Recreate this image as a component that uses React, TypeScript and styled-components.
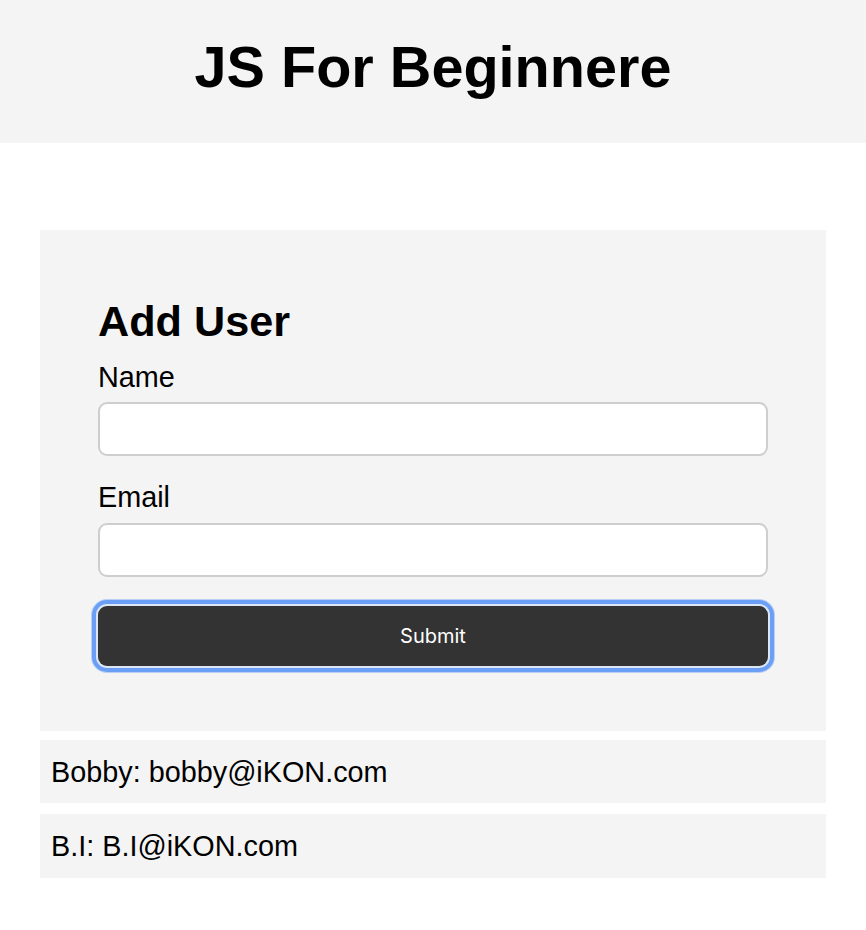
import styled, { createGlobalStyle } from "styled-components";

type User = {
  name: string;
  email: string;
};

const users: User[] = [
  { name: "Bobby", email: "bobby@iKON.com" },
  { name: "B.I", email: "B.I@iKON.com" },
];

const GlobalStyle = createGlobalStyle`
  body {
    margin: 0;
    background: #ffffff;
    color: #000000;
    font-family: "Liberation Sans", Arial, sans-serif;
  }
`;

const Header = styled.header`
  background-color: #f4f4f4;
  padding: 39px 0 46px;
  text-align: center;
`;

const Title = styled.h1`
  margin: 0;
  font-size: 57.6px;
  line-height: 1;
  font-weight: 700;
`;

const Container = styled.main`
  margin: 87px 40px 0;
`;

const FormPanel = styled.form`
  display: flex;
  flex-direction: column;
  background-color: #f4f4f4;
  padding: 70px 58px 65px;
`;

const FormTitle = styled.h2`
  margin: 0 0 20px;
  font-size: 43.2px;
  line-height: 1;
  font-weight: 700;
`;

const Label = styled.label`
  display: block;
  font-size: 28.8px;
  line-height: 1;
  margin-bottom: 10.6px;
`;

const Input = styled.input`
  box-sizing: border-box;
  width: 100%;
  height: 54px;
  margin: 0 0 27px;
  padding: 0 14px;
  background: #ffffff;
  border: 2px solid #cecece;
  border-radius: 9px;
  font-size: 24px;
  font-family: inherit;
  outline: none;
`;

const SubmitButton = styled.button`
  margin-top: 2.5px;
  height: 60px;
  width: 100%;
  border: none;
  border-radius: 9px;
  background-color: #333333;
  color: #ffffff;
  font-family: Inter, "Noto Sans", sans-serif;
  font-size: 20px;
  cursor: pointer;
  box-shadow: 0 0 0 2px #dbe6f7, 0 0 0 6px #6a9ff5, 0 0 0 7px #b9cff5;
`;

const UserList = styled.ul`
  list-style: none;
  margin: 9px 0 0;
  padding: 0;
  display: flex;
  flex-direction: column;
  gap: 11px;
`;

const UserItem = styled.li`
  background-color: #f4f4f4;
  padding: 18px 11px 16.5px;
  font-size: 28.8px;
  line-height: 1;
`;

export default function App() {
  return (
    <>
      <GlobalStyle />
      <Header>
        <Title>JS For Beginnere</Title>
      </Header>
      <Container>
        <FormPanel onSubmit={(e) => e.preventDefault()}>
          <FormTitle>Add User</FormTitle>
          <Label htmlFor="name">Name</Label>
          <Input id="name" type="text" />
          <Label htmlFor="email">Email</Label>
          <Input id="email" type="text" />
          <SubmitButton type="submit">Submit</SubmitButton>
        </FormPanel>
        <UserList>
          {users.map((u) => (
            <UserItem key={u.email}>
              {u.name}: {u.email}
            </UserItem>
          ))}
        </UserList>
      </Container>
    </>
  );
}
